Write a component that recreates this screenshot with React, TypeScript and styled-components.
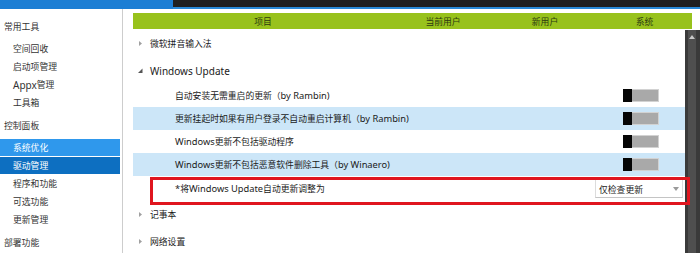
import * as React from "react";
import styled, { createGlobalStyle } from "styled-components";

const GlobalStyle = createGlobalStyle`
  html, body {
    margin: 0;
    padding: 0;
    background: #fff;
  }
  body {
    font-family: "Noto Sans", "Noto Sans CJK SC", sans-serif;
    font-size: 10px;
    color: #1a1a1a;
  }
`;

// screenshot is scaled down: han glyphs come out narrower than latin ones
const hanRun = /([\u2e80-\u9fff\uff00-\uffef]+)/;

const Han = styled.span`
  font-family: "Noto Sans CJK SC", sans-serif;
  font-size: 8.8px;
`;

const Txt = ({ children }: { children: string }) => (
  <>
    {children.split(hanRun).map((part, i) =>
      i % 2 === 1 ? <Han key={i}>{part}</Han> : <React.Fragment key={i}>{part}</React.Fragment>
    )}
  </>
);

const Page = styled.div`
  width: 700px;
  height: 253px;
  overflow: hidden;
  display: flex;
  flex-direction: column;
`;

const TopBar = styled.div`
  display: flex;
  height: 9px;
  flex-shrink: 0;
`;

const TopBlue = styled.div`
  width: 173px;
  background: #1c7ed4;
`;

const TopDark = styled.div`
  flex: 1;
  background: #202020;
  border-bottom: 2px solid #2a8ad8;
`;

const Main = styled.div`
  flex: 1;
  display: flex;
  min-height: 0;
`;

const Sidebar = styled.div`
  width: 122px;
  border-right: 1px solid #cdcdcd;
  padding-top: 4px;
  flex-shrink: 0;
`;

const GroupTitle = styled.div`
  height: 26px;
  display: flex;
  align-items: center;
  padding-left: 4px;
  color: #333;
`;

const NavItem = styled.div<{ $state?: "hover" | "active" }>`
  height: 17px;
  margin: 1px 0;
  width: 120px;
  display: flex;
  align-items: center;
  padding-left: 13px;
  box-sizing: border-box;
  color: ${(p) => (p.$state ? "#fff" : "#333")};
  background: ${(p) =>
    p.$state === "hover" ? "#2f98ec" : p.$state === "active" ? "#0d6fc1" : "transparent"};
`;

const Content = styled.div`
  flex: 1;
  display: flex;
  flex-direction: column;
  padding: 4px 0 0 10px;
  min-width: 0;
`;

const Columns = styled.div`
  display: grid;
  grid-template-columns: 260px 100px 104px 1fr;
  align-items: center;
`;

const Header = styled(Columns)`
  height: 16px;
  margin-right: 8px;
  background: #98c21c;
  color: #2d3a10;
  text-align: center;
  flex-shrink: 0;
`;

const Body = styled.div`
  flex: 1;
  display: flex;
  min-height: 0;
`;

const List = styled.div`
  flex: 1;
  padding-top: 1px;
`;

const GroupRow = styled.div`
  height: 27px;
  display: flex;
  align-items: center;
  gap: 7px;
  padding-left: 5px;
`;

const Arrow = styled.svg`
  width: 5px;
  height: 7px;
  flex-shrink: 0;
`;

const ChildRow = styled(Columns)<{ $alt?: boolean; $tall?: boolean }>`
  position: relative;
  height: ${(p) => (p.$tall ? 25 : 23)}px;
  background: ${(p) => (p.$alt ? "#cce6f8" : "#fff")};
`;

const Label = styled.div`
  padding-left: 42px;
  white-space: nowrap;
  font-size: 9.3px;
`;

const SystemCell = styled.div`
  grid-column: 4;
  display: flex;
  align-items: center;
`;

const Toggle = styled.div`
  margin-left: 26px;
  width: 36px;
  height: 13px;
  box-sizing: border-box;
  border: 1px solid #d2d2d2;
  background: #a9a9a9;
  display: flex;
`;

const Knob = styled.div`
  width: 9px;
  margin: -1px 0 -1px -1px;
  background: #050505;
`;

const Select = styled.div`
  margin-left: -2px;
  width: 88px;
  height: 19px;
  box-sizing: border-box;
  border: 1px solid #dcdcdc;
  border-bottom-color: #c4c4c4;
  background: #fff;
  display: flex;
  align-items: center;
  justify-content: space-between;
  padding: 0 3px 0 3px;
  color: #222;
`;

const Caret = styled.svg`
  width: 6px;
  height: 4px;
`;

const Highlight = styled.div`
  position: absolute;
  left: 17px;
  right: -5px;
  top: 1px;
  bottom: -4px;
  border: 3px solid #e0161f;
  pointer-events: none;
  z-index: 2;
`;

const ScrollBar = styled.div`
  width: 15px;
  margin-top: 1px;
  flex-shrink: 0;
  display: flex;
  background: #3a3a3a;
`;

const ScrollThumb = styled.div`
  margin-left: 3px;
  width: 8px;
  background: #4f4f4f;
  display: flex;
  justify-content: center;
  padding-top: 5px;
`;

const Collapsed = () => (
  <Arrow viewBox="0 0 5 7">
    <path d="M1 1 L4 3.5 L1 6 Z" fill="#a0a0a0" />
  </Arrow>
);

const Expanded = () => (
  <Arrow viewBox="0 0 5 7">
    <path d="M4.5 1.5 L4.5 6 L0 6 Z" fill="#555" />
  </Arrow>
);

const Switch = () => (
  <Toggle>
    <Knob />
  </Toggle>
);

const nav = [
  { title: "常用工具", items: ["空间回收", "启动项管理", "Appx管理", "工具箱"] },
  { title: "控制面板", items: ["系统优化", "驱动管理", "程序和功能", "可选功能", "更新管理"] },
  { title: "部署功能", items: [] as string[] },
];

const updates = [
  "自动安装无需重启的更新（by Rambin)",
  "更新挂起时如果有用户登录不自动重启计算机（by Rambin)",
  "Windows更新不包括驱动程序",
  "Windows更新不包括恶意软件删除工具（by Winaero)",
];

export default function App() {
  return (
    <Page>
      <GlobalStyle />
      <TopBar>
        <TopBlue />
        <TopDark />
      </TopBar>
      <Main>
        <Sidebar>
          {nav.map((group) => (
            <React.Fragment key={group.title}>
              <GroupTitle>
                <Txt>{group.title}</Txt>
              </GroupTitle>
              {group.items.map((item) => (
                <NavItem
                  key={item}
                  $state={item === "系统优化" ? "hover" : item === "驱动管理" ? "active" : undefined}
                >
                  <Txt>{item}</Txt>
                </NavItem>
              ))}
            </React.Fragment>
          ))}
        </Sidebar>
        <Content>
          <Header>
            <div><Txt>项目</Txt></div>
            <div><Txt>当前用户</Txt></div>
            <div><Txt>新用户</Txt></div>
            <div><Txt>系统</Txt></div>
          </Header>
          <Body>
            <List>
              <GroupRow>
                <Collapsed />
                <Txt>微软拼音输入法</Txt>
              </GroupRow>
              <GroupRow>
                <Expanded />
                <span>Windows Update</span>
              </GroupRow>
              {updates.map((u, i) => (
                <ChildRow key={u} $alt={i % 2 === 1}>
                  <Label>
                    <Txt>{u}</Txt>
                  </Label>
                  <SystemCell>
                    <Switch />
                  </SystemCell>
                </ChildRow>
              ))}
              <ChildRow $tall>
                <Label>
                  <Txt>*将Windows Update自动更新调整为</Txt>
                </Label>
                <SystemCell>
                  <Select>
                    <span><Txt>仅检查更新</Txt></span>
                    <Caret viewBox="0 0 6 4">
                      <path d="M0 0 L6 0 L3 4 Z" fill="#9a9a9a" />
                    </Caret>
                  </Select>
                </SystemCell>
                <Highlight />
              </ChildRow>
              <GroupRow>
                <Collapsed />
                <Txt>记事本</Txt>
              </GroupRow>
              <GroupRow>
                <Collapsed />
                <Txt>网络设置</Txt>
              </GroupRow>
            </List>
            <ScrollBar>
              <ScrollThumb>
                <Caret viewBox="0 0 6 4">
                  <path d="M0 4 L6 4 L3 0 Z" fill="#c8c8c8" />
                </Caret>
              </ScrollThumb>
            </ScrollBar>
          </Body>
        </Content>
      </Main>
    </Page>
  );
}
